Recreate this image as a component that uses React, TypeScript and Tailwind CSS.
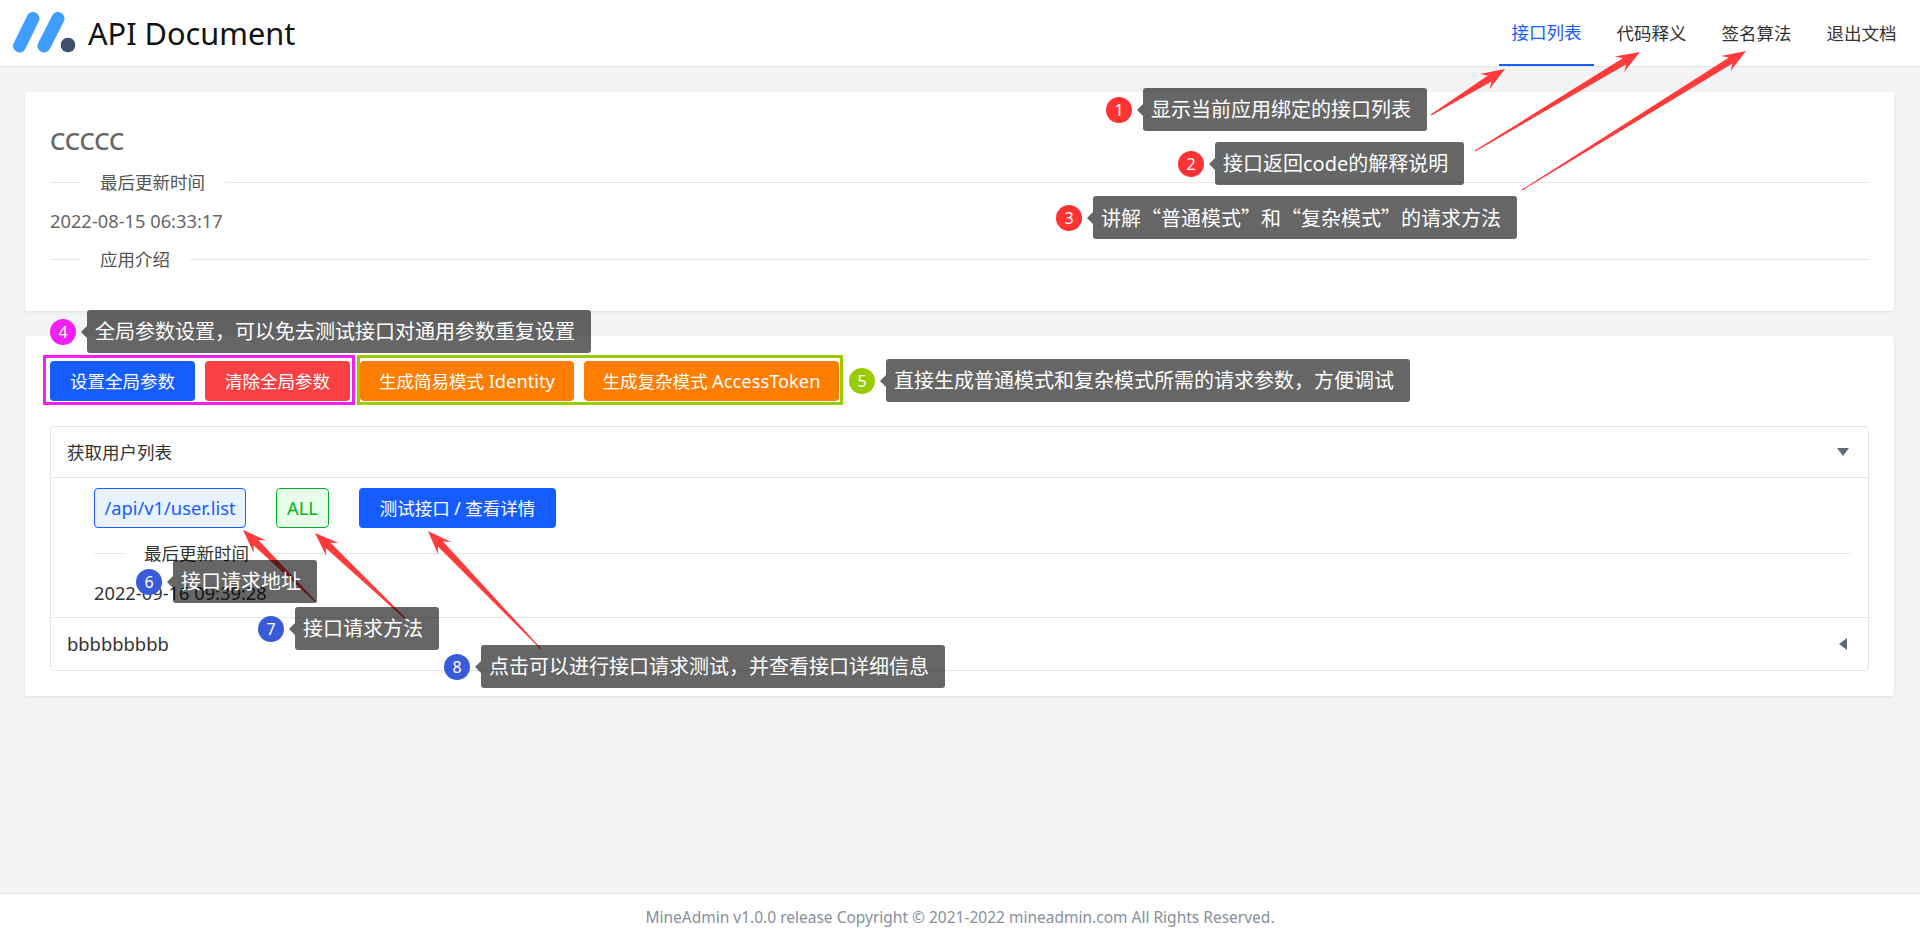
import React from "react";

const arrows = [
  [1431, 115, 1505, 69],
  [1475, 151, 1640, 52],
  [1522, 190, 1746, 51],
  [316, 602, 243, 530],
  [409, 622, 315, 533],
  [541, 649, 428, 531],
];

function arrowPath([x1, y1, x2, y2]: number[]) {
  const len = Math.hypot(x2 - x1, y2 - y1);
  const ux = (x2 - x1) / len;
  const uy = (y2 - y1) / len;
  const nx = -uy;
  const ny = ux;
  const head = 24;
  const bx = x2 - ux * head;
  const by = y2 - uy * head;
  const neckX = x2 - ux * (head - 6);
  const neckY = y2 - uy * (head - 6);
  const p = (x: number, y: number) => `${x.toFixed(1)} ${y.toFixed(1)}`;
  return [
    `M${p(x1 + nx * 0.5, y1 + ny * 0.5)}`,
    `L${p(neckX + nx * 3.5, neckY + ny * 3.5)}`,
    `L${p(bx + nx * 9, by + ny * 9)}`,
    `L${p(x2, y2)}`,
    `L${p(bx - nx * 9, by - ny * 9)}`,
    `L${p(neckX - nx * 3.5, neckY - ny * 3.5)}`,
    `L${p(x1 - nx * 0.5, y1 - ny * 0.5)}`,
    "Z",
  ].join(" ");
}

function Note({
  pos,
  badge,
  n,
  children,
}: {
  pos: string;
  badge: string;
  n: number;
  children: React.ReactNode;
}) {
  return (
    <div className={`absolute flex items-center ${pos}`}>
      <div className={`flex h-[26px] w-[26px] items-center justify-center rounded-full text-[16px] leading-none text-white ${badge}`}>
        {n}
      </div>
      <div className="ml-[5px] h-0 w-0 border-y-[6px] border-r-[6px] border-y-transparent border-r-[rgba(0,0,0,0.6)]" />
      <div className="flex h-[43px] items-center whitespace-nowrap rounded-[3px] bg-[rgba(0,0,0,0.6)] pl-2 pr-4 text-[20px] leading-none text-white">
        {children}
      </div>
    </div>
  );
}

function Divider({ label, tone }: { label: string; tone: string }) {
  return (
    <div className="flex h-6 items-center">
      <div className="h-px w-[30px] bg-[#e5e6eb]" />
      <span className={`px-5 text-[17.5px] leading-6 ${tone}`}>{label}</span>
      <div className="h-px flex-1 bg-[#e5e6eb]" />
    </div>
  );
}

function Btn({ color, children }: { color: string; children: React.ReactNode }) {
  return (
    <div className={`flex h-10 items-center justify-center whitespace-nowrap rounded-[4px] text-[17.5px] text-white ${color}`}>
      {children}
    </div>
  );
}

export default function App() {
  return (
    <div className="relative flex h-[938px] flex-col overflow-hidden bg-[#f2f3f5] font-['Noto_Sans','Noto_Sans_CJK_SC',sans-serif] text-[#333]">
      <header className="flex h-[67px] shrink-0 items-center justify-between border-b border-[#e5e6eb] bg-white pl-3 pr-[11px]">
        <div className="flex items-center">
          <svg width="64" height="44" viewBox="0 0 64 44" className="block">
            <path d="M7.5 35 L21 7.5 M32 35 L46 7.5" stroke="#409eff" strokeWidth="13" strokeLinecap="round" fill="none" />
            <circle cx="56" cy="34" r="7.3" fill="#3d5069" />
          </svg>
          <span className="ml-3 text-[30.7px] leading-none text-[#111]">API Document</span>
        </div>
        <nav className="flex h-full gap-[10px] text-[17.5px]">
          <div className="flex h-full w-[95px] items-center justify-center border-b-2 border-[#165dff] text-[#165dff]">接口列表</div>
          <div className="flex h-full w-[95px] items-center justify-center">代码释义</div>
          <div className="flex h-full w-[95px] items-center justify-center">签名算法</div>
          <div className="flex h-full w-[95px] items-center justify-center">退出文档</div>
        </nav>
      </header>

      <main className="flex-1 pl-[25px] pr-[26px] pt-[25px]">
        <section className="h-[219px] rounded-[3px] bg-white px-[25px] pt-[32px] shadow-[0_1px_3px_rgba(0,0,0,0.08)]">
          <h2 className="h-[34px] text-[24px] font-medium leading-[34px] text-[#666]">CCCCC</h2>
          <div className="mt-[12px]">
            <Divider label="最后更新时间" tone="text-[#555]" />
          </div>
          <div className="mt-[15px] h-6 text-[18.3px] leading-6 text-[#666]">2022-08-15 06:33:17</div>
          <div className="mt-[14px]">
            <Divider label="应用介绍" tone="text-[#555]" />
          </div>
        </section>

        <section className="mt-[25px] h-[360px] rounded-[3px] bg-white p-[25px] shadow-[0_1px_3px_rgba(0,0,0,0.08)]">
          <div className="flex gap-[10px]">
            <div className="w-[145px]"><Btn color="bg-[#165dff]">设置全局参数</Btn></div>
            <div className="w-[145px]"><Btn color="bg-[#f94144]">清除全局参数</Btn></div>
            <div className="w-[214px]"><Btn color="bg-[#ff7d00]">生成简易模式&nbsp;<span className="text-[18.3px]">Identity</span></Btn></div>
            <div className="w-[255px]"><Btn color="bg-[#ff7d00]">生成复杂模式&nbsp;<span className="text-[18.3px]">AccessToken</span></Btn></div>
          </div>

          <div className="mt-[25px] rounded-[4px] border border-[#e5e6eb]">
            <div className="flex h-[51px] items-center justify-between border-b border-[#e5e6eb] pl-[16px] pr-[19px] text-[17.5px]">
              <span>获取用户列表</span>
              <div className="h-0 w-0 border-x-[6px] border-t-[8px] border-x-transparent border-t-[#5f6b7c]" />
            </div>
            <div className="h-[140px] border-b border-[#e5e6eb] pl-[43px] pr-[17px] pt-[10px]">
              <div className="flex gap-[30px] text-[18.3px]">
                <div className="flex h-10 w-[152px] items-center justify-center whitespace-nowrap rounded-[4px] border border-[#165dff] bg-[#e8f3ff] text-[#165dff]">/api/v1/user.list</div>
                <div className="flex h-10 w-[53px] items-center justify-center rounded-[4px] border border-[#00b42a] bg-[#e8ffea] text-[#00b42a]">ALL</div>
                <div className="w-[197px]"><Btn color="bg-[#165dff]">测试接口 / 查看详情</Btn></div>
              </div>
              <div className="mt-[13px]">
                <Divider label="最后更新时间" tone="text-[#333]" />
              </div>
              <div className="mt-4 h-6 text-[18.3px] leading-6">2022-09-16 09:39:28</div>
            </div>
            <div className="flex h-[52px] items-center justify-between pl-[16px] pr-[21px] text-[18.4px]">
              <span>bbbbbbbbb</span>
              <div className="h-0 w-0 border-y-[6px] border-r-[8px] border-y-transparent border-r-[#5f6b7c]" />
            </div>
          </div>
        </section>
      </main>

      <footer className="flex h-[45px] shrink-0 items-center justify-center border-t border-[#e5e6eb] bg-white pt-[3px] text-[15.5px] text-[#86909c]">
        MineAdmin v1.0.0 release Copyright © 2021-2022 mineadmin.com All Rights Reserved.
      </footer>

      <svg className="pointer-events-none absolute left-0 top-0" width="1920" height="938">
        {arrows.map((a, i) => (
          <path key={i} d={arrowPath(a)} fill="#ff3b3b" />
        ))}
      </svg>

      <div className="absolute left-[43px] top-[355px] h-[50px] w-[312px] border-[3px] border-[#f81ff0]" />
      <div className="absolute left-[357px] top-[355px] h-[50px] w-[486px] border-[3px] border-[#9ccc00]" />

      <Note pos="left-[1106px] top-[88px]" badge="bg-[#ff3333]" n={1}>显示当前应用绑定的接口列表</Note>
      <Note pos="left-[1178px] top-[142px]" badge="bg-[#ff3333]" n={2}>接口返回code的解释说明</Note>
      <Note pos="left-[1056px] top-[196px]" badge="bg-[#ff3333]" n={3}>
        <span className="font-['Noto_Sans_CJK_SC',sans-serif]">讲解“普通模式”和“复杂模式”的请求方法</span>
      </Note>
      <Note pos="left-[50px] top-[310px]" badge="bg-[#f020f0]" n={4}>全局参数设置，可以免去测试接口对通用参数重复设置</Note>
      <Note pos="left-[849px] top-[359px]" badge="bg-[#99cc00]" n={5}>直接生成普通模式和复杂模式所需的请求参数，方便调试</Note>
      <Note pos="left-[136px] top-[560px]" badge="bg-[#3a5bd9]" n={6}>接口请求地址</Note>
      <Note pos="left-[258px] top-[607px]" badge="bg-[#3a5bd9]" n={7}>接口请求方法</Note>
      <Note pos="left-[444px] top-[645px]" badge="bg-[#3a5bd9]" n={8}>点击可以进行接口请求测试，并查看接口详细信息</Note>
    </div>
  );
}
